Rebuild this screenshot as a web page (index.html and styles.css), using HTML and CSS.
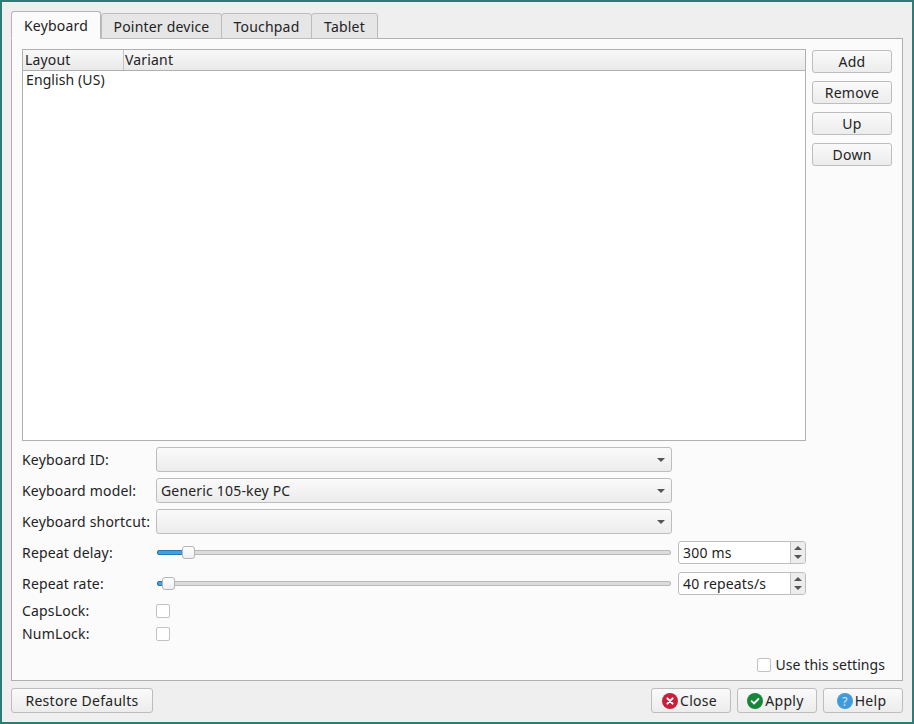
FILE: index.html
```html
<!DOCTYPE html>
<html lang="en">
<head>
    <meta charset="UTF-8">
    <title>Input settings</title>
    <link rel="stylesheet" href="styles.css">
</head>
<body>
    <div class="window">
        <!-- tabs -->
        <div class="tabs">
            <div class="tab tab-active tab-keyboard">Keyboard</div>
            <div class="tab tab-pointer">Pointer device</div>
            <div class="tab tab-touchpad">Touchpad</div>
            <div class="tab tab-tablet">Tablet</div>
        </div>

        <div class="panel">
            <div class="layout-row">
                <div class="table">
                    <div class="table-head">
                        <div class="head-cell head-layout">Layout</div>
                        <div class="head-cell head-variant">Variant</div>
                    </div>
                    <div class="table-row">English (US)</div>
                </div>
                <div class="side-buttons">
                    <button class="btn">Add</button>
                    <button class="btn">Remove</button>
                    <button class="btn">Up</button>
                    <button class="btn">Down</button>
                </div>
            </div>

            <div class="form">
                <div class="label">Keyboard ID:</div>
                <div class="combo"><span></span><i class="combo-arrow"></i></div>
                <div></div>

                <div class="label">Keyboard model:</div>
                <div class="combo"><span>Generic 105-key PC</span><i class="combo-arrow"></i></div>
                <div></div>

                <div class="label">Keyboard shortcut:</div>
                <div class="combo"><span></span><i class="combo-arrow"></i></div>
                <div></div>

                <div class="label">Repeat delay:</div>
                <div class="slider">
                    <div class="groove"><div class="groove-fill" style="width: 27px"></div></div>
                    <div class="handle" style="left: 26px"></div>
                </div>
                <div class="spin">
                    <span class="spin-value">300 ms</span>
                    <div class="spin-buttons"><i class="arrow-up"></i><i class="arrow-down"></i></div>
                </div>

                <div class="label">Repeat rate:</div>
                <div class="slider">
                    <div class="groove"><div class="groove-fill" style="width: 7px"></div></div>
                    <div class="handle" style="left: 6px"></div>
                </div>
                <div class="spin">
                    <span class="spin-value">40 repeats/s</span>
                    <div class="spin-buttons"><i class="arrow-up"></i><i class="arrow-down"></i></div>
                </div>

                <div class="label">CapsLock:</div>
                <div class="check-cell"><div class="checkbox"></div></div>
                <div></div>

                <div class="label">NumLock:</div>
                <div class="check-cell"><div class="checkbox"></div></div>
                <div></div>
            </div>

            <div class="use-settings">
                <div class="checkbox"></div>
                <span>Use this settings</span>
            </div>
        </div>

        <!-- bottom buttons -->
        <div class="footer">
            <button class="btn btn-restore">Restore Defaults</button>
            <div class="footer-right">
                <button class="btn btn-icon">
                    <svg width="16" height="16" viewBox="0 0 16 16">
                        <circle cx="8" cy="8" r="8" fill="#c8203c"/>
                        <path d="M5.4 5.4 L10.6 10.6 M10.6 5.4 L5.4 10.6" stroke="#fff" stroke-width="2" stroke-linecap="round"/>
                    </svg>
                    Close
                </button>
                <button class="btn btn-icon">
                    <svg width="16" height="16" viewBox="0 0 16 16">
                        <circle cx="8" cy="8" r="8" fill="#16873a"/>
                        <path d="M4.6 8.2 L7 10.4 L11.4 6" fill="none" stroke="#fff" stroke-width="1.8" stroke-linecap="round"/>
                    </svg>
                    Apply
                </button>
                <button class="btn btn-icon">
                    <svg width="16" height="16" viewBox="0 0 16 16">
                        <circle cx="8" cy="8" r="8" fill="#3f9bdc"/>
                        <text x="8" y="12.5" text-anchor="middle" font-size="12" font-family="Noto Sans" fill="#d5ebfa">?</text>
                    </svg>
                    Help
                </button>
            </div>
        </div>
    </div>
</body>
</html>
```

FILE: styles.css
```css
* {
    box-sizing: border-box;
}

body {
    margin: 0;
    font-family: "Noto Sans", sans-serif;
    font-size: 14px;
    letter-spacing: 0.18px;
    color: #232323;
}

.window {
    display: flex;
    flex-direction: column;
    width: 914px;
    height: 724px;
    padding: 9px;
    border: 2px solid #2f7b78;
    background-color: #efefef;
}

/* tabs */
.tabs {
    display: flex;
    align-items: flex-end;
    height: 28px;
    margin-bottom: -1px;
    position: relative;
    letter-spacing: 0.2px;
}

.tab {
    display: flex;
    align-items: center;
    justify-content: center;
    height: 26px;
    margin-left: -1px;
    border: 1px solid #bcbcbc;
    border-radius: 3px 3px 0 0;
    background-color: #e6e6e6;
}

.tab-active {
    height: 28px;
    margin-left: 0;
    border-color: #b4b4b4;
    border-bottom-color: #fbfbfb;
    background-color: #fbfbfb;
    z-index: 1;
}

.tab-keyboard { width: 90px; }
.tab-pointer { width: 121px; margin-left: 0; }
.tab-touchpad { width: 91px; }
.tab-tablet { width: 67px; }

/* main panel */
.panel {
    flex: 1;
    display: flex;
    flex-direction: column;
    padding: 10px 10px 6px;
    border: 1px solid #b0b0b0;
    background-color: #fbfbfb;
}

.layout-row {
    display: flex;
    gap: 6px;
    height: 392px;
}

.table {
    flex: 1;
    border: 1px solid #b0b0b0;
    background-color: #fff;
}

.table-head {
    display: flex;
    height: 21px;
    border-bottom: 1px solid #b0b0b0;
    background: linear-gradient(to bottom, #f8f8f8, #e9e9e9);
}

.head-cell {
    padding-left: 2px;
    line-height: 20px;
}

.head-layout {
    width: 101px;
    border-right: 1px solid #c4c4c4;
}

.head-variant {
    padding-left: 1px;
}

.table-row {
    padding-left: 3px;
    line-height: 18px;
    letter-spacing: 0.1px;
}

.side-buttons {
    display: flex;
    flex-direction: column;
    gap: 8px;
    padding-top: 1px;
}

.btn {
    width: 80px;
    height: 23px;
    padding: 0;
    border: 1px solid #bdbdbd;
    border-radius: 3px;
    background: linear-gradient(to bottom, #fafafa, #ececec);
    font-family: inherit;
    font-size: 14px;
    letter-spacing: 0.28px;
    color: inherit;
}

/* form */
.form {
    display: grid;
    grid-template-columns: 134px 516px 134px;
    grid-template-rows: 25px 25px 25px 25px 25px 17px 17px;
    row-gap: 6px;
    margin-top: 6px;
    width: 784px;
}

.form .spin {
    margin-left: 6px;
    width: 128px;
}

.label {
    display: flex;
    align-items: center;
    white-space: nowrap;
}

.combo {
    display: flex;
    align-items: center;
    justify-content: space-between;
    padding: 0 6px 0 4px;
    border: 1px solid #bdbdbd;
    border-radius: 3px;
    background: linear-gradient(to bottom, #fafafa, #ececec);
}

.combo-arrow {
    width: 0;
    height: 0;
    border-left: 4px solid transparent;
    border-right: 4px solid transparent;
    border-top: 4px solid #555;
}

.slider {
    position: relative;
    display: flex;
    align-items: center;
    padding: 0 1px;
}

.groove {
    flex: 1;
    height: 5px;
    border: 1px solid #b9b9b9;
    border-radius: 2px;
    background-color: #dcdcdc;
}

.groove-fill {
    height: 5px;
    margin: -1px;
    border: 1px solid #2b78b4;
    border-radius: 2px;
    background-color: #3fa0e4;
}

.handle {
    position: absolute;
    top: 6px;
    width: 13px;
    height: 13px;
    border: 1px solid #b4b4b4;
    border-radius: 3px;
    background: linear-gradient(to bottom, #fdfdfd, #f0f0f0);
}

.spin {
    display: flex;
    height: 23px;
    align-self: center;
    border: 1px solid #bdbdbd;
    border-radius: 3px;
    background-color: #fff;
    overflow: hidden;
}

.spin-value {
    flex: 1;
    padding-left: 4px;
    line-height: 21px;
}

.spin-buttons {
    display: flex;
    flex-direction: column;
    align-items: center;
    justify-content: center;
    gap: 5px;
    width: 15px;
    border-left: 1px solid #c4c4c4;
    background-color: #ececec;
}

.arrow-up,
.arrow-down {
    width: 0;
    height: 0;
    border-left: 4px solid transparent;
    border-right: 4px solid transparent;
}

.arrow-up { border-bottom: 4px solid #555; }
.arrow-down { border-top: 4px solid #555; }

.check-cell {
    display: flex;
    align-items: center;
}

.checkbox {
    width: 14px;
    height: 14px;
    border: 1px solid #c2c2c2;
    border-radius: 2px;
    background-color: #fff;
}

.use-settings {
    display: flex;
    align-items: center;
    justify-content: flex-end;
    gap: 5px;
    margin-top: auto;
    padding-right: 7px;
    letter-spacing: 0.06px;
}

/* footer */
.footer {
    display: flex;
    justify-content: space-between;
    margin-top: 7px;
}

.footer .btn {
    height: 25px;
}

.btn-restore {
    width: 142px;
}

.footer-right {
    display: flex;
    gap: 6px;
}

.btn-icon {
    display: flex;
    align-items: center;
    justify-content: center;
    gap: 2px;
    padding-right: 3px;
}
```
